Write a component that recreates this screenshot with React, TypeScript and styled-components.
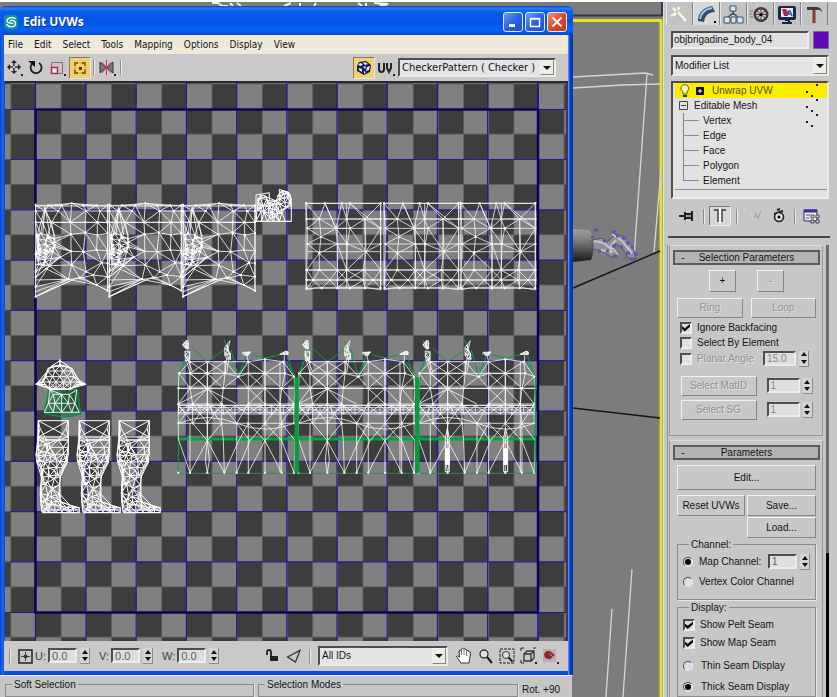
import React, { useState } from "react";
import styled, { createGlobalStyle, css } from "styled-components";

const GlobalStyle = createGlobalStyle`
  *, *::before, *::after { box-sizing: border-box; }
  html, body, #root { height: 100%; }
  body { margin: 0; overflow: hidden; background: #fff; color: #141414; font: 10px/12px "Liberation Sans", Arial, sans-serif; }
  button, input, select { font: inherit; color: inherit; margin: 0; }
  fieldset { min-width: 0; margin: 0; }
`;

/* ---------- geometry ---------- */

type Pt = [number, number];
type Line = [number, number, number, number];

const triangulate = (pts: Pt[], maxEdge: number): Line[] => {
  const seen = new Set<string>();
  const out: Line[] = [];
  const add = (a: number, b: number) => {
    const key = a < b ? `${a}-${b}` : `${b}-${a}`;
    const [p, q] = [pts[a], pts[b]];
    if (seen.has(key) || Math.hypot(p[0] - q[0], p[1] - q[1]) > maxEdge) return;
    seen.add(key);
    out.push([p[0], p[1], q[0], q[1]]);
  };
  for (let i = 0; i < pts.length; i++)
    for (let j = i + 1; j < pts.length; j++)
      for (let k = j + 1; k < pts.length; k++) {
        const [ax, ay] = pts[i];
        const [bx, by] = pts[j];
        const [cx, cy] = pts[k];
        const d = 2 * (ax * (by - cy) + bx * (cy - ay) + cx * (ay - by));
        if (Math.abs(d) < 1) continue;
        const a2 = ax * ax + ay * ay;
        const b2 = bx * bx + by * by;
        const c2 = cx * cx + cy * cy;
        const ux = (a2 * (by - cy) + b2 * (cy - ay) + c2 * (ay - by)) / d;
        const uy = (a2 * (cx - bx) + b2 * (ax - cx) + c2 * (bx - ax)) / d;
        const r = Math.hypot(ax - ux, ay - uy);
        if (r > maxEdge * 3) continue;
        if (pts.some((p) => Math.hypot(p[0] - ux, p[1] - uy) < r - 0.01)) continue;
        add(i, j);
        add(j, k);
        add(i, k);
      }
  return out;
};

const scatter = (x: number, y: number, w: number, h: number, n: number, seed: number): Pt[] => {
  let s = seed * 7919;
  const next = () => {
    s = (s * 16807) % 2147483647;
    return s / 2147483647;
  };
  return Array.from({ length: n }, () => [Math.round(x + next() * w), Math.round(y + next() * h)] as Pt);
};

const row = (y: number, xs: number[]): Pt[] => xs.map((x) => [x, y]);
const toPath = (lines: Line[]) => lines.map((l) => `M${l[0]} ${l[1]}L${l[2]} ${l[3]}`).join("");
const toDots = (pts: Pt[]) => pts.map((p) => `M${p[0] - 3} ${p[1]}h6`).join("");

const fan = (hub: Pt, pts: Pt[]): Line[] => pts.map((p) => [hub[0], hub[1], p[0], p[1]]);

const tunicPts: Pt[] = [
  ...row(76, [107, 145, 185, 250, 290, 323]), [215, 70],
  ...row(93, [107, 135, 175, 258, 300, 323]),
  ...row(127, [107, 128, 155, 211, 256, 292, 323]),
  [213, 163], [256, 158], [292, 165], [323, 160],
  [180, 232], [213, 214], [250, 215], [290, 210], [323, 212],
  [215, 255], [258, 275], [280, 285], [305, 248], [323, 250],
  [205, 298], [240, 295], [290, 315], [323, 290], [323, 332],
  ...scatter(107, 160, 64, 60, 34, 7),
  ...scatter(107, 215, 45, 45, 14, 23),
  [107, 275], [107, 292], [107, 320], [107, 350],
];
const tunic =
  toPath(triangulate(tunicPts, 95)) +
  toPath(fan([180, 232], [[107, 275], [107, 292], [107, 255], [120, 240]])) +
  toPath(fan([205, 298], [[107, 350], [107, 335], [107, 320], [107, 300], [135, 265]])) +
  toPath(fan([135, 82], [[112, 165], [128, 165], [150, 165], [165, 170]])) +
  "M107 70V350L240 290L323 332V76M107 78H323M107 127H323M107 350L215 300";

const clothPts: Pt[] = [
  ...row(70, [168, 225, 275, 300, 392]),
  ...row(117, [170, 208, 290, 345, 392]),
  ...row(145, [172, 258, 300, 392]), [213, 170],
  ...row(192, [172, 262, 292, 392]), [208, 220], [348, 215],
  ...row(270, [170, 208, 262, 290, 340, 392]),
  ...row(300, [170, 190, 240, 262, 290, 340, 370, 392]),
  ...row(325, [170, 215, 262, 300, 345, 392]),
];
const cloth =
  toPath(triangulate(clothPts, 105)) +
  "M168 66V330M392 66V330M168 70H392M170 117H392M170 145H392M172 192H392M172 215H392M170 270H392M170 300H392M262 130V325M290 70V325M345 117V325M225 70L258 145M300 70L392 145M170 330L200 322H350L392 330";

const torsoPts: Pt[] = [
  ...row(95, [60, 112, 165, 235, 340]), [285, 88],
  ...row(130, [27, 60, 112, 165, 235, 285, 345]), [205, 140], [372, 140],
  ...row(175, [25, 60, 112, 160, 235, 285, 335, 375]),
  ...row(222, [25, 68, 112, 155, 235, 285, 330, 372]),
  ...row(280, [25, 68, 112, 155, 200, 235, 285, 335, 372]),
];
const torsoBand: Pt[] = [
  ...row(226, [25, 55, 90, 125, 160, 195, 235, 270, 305, 340, 372]),
  ...row(240, [35, 75, 112, 145, 180, 215, 250, 285, 322, 358]),
  ...row(252, [25, 55, 90, 125, 160, 195, 235, 270, 305, 340, 372]),
];
const torso =
  toPath(triangulate(torsoPts, 75)) +
  toPath(triangulate(torsoBand, 60)) +
  "M25 226H372M25 233H372M25 240H372M25 247H372M27 130H345M25 175H375M25 280Q112 245 200 280T372 280" +
  toPath(fan([112, 332], [[60, 428], [163, 428], [68, 280], [155, 280], [112, 97]])) +
  toPath(fan([285, 332], [[235, 428], [335, 428], [235, 280], [335, 280], [285, 88]])) +
  toPath(fan([112, 177], [[25, 222], [200, 222], [60, 130], [165, 130]])) +
  "M25 280V327L60 428V280M163 428L205 335L235 280V428M200 428L240 332L200 280V428M335 428V280L375 332L372 428L335 332M112 280V332L106 390L112 428L118 390L112 332M285 332V428M155 280L160 332L163 428M240 332L285 280L335 332M330 95V428";
const straps = toPath([
  ...triangulate(scatter(38, 30, 24, 34, 16, 21), 30),
  ...triangulate(scatter(44, 60, 16, 34, 10, 3), 30),
  ...triangulate(scatter(163, 30, 20, 60, 20, 33), 32),
  ...triangulate(scatter(212, 64, 30, 12, 12, 9), 30),
  ...triangulate(scatter(329, 64, 28, 12, 12, 14), 30),
]) + "M48 90L60 127M54 90L68 127M170 85L165 128M177 85L170 128M230 76L235 95M343 76L343 95";

const legPts: Pt[] = [
  ...row(242, [115, 205]), ...row(291, [115, 205]), [120, 265], [198, 265],
  ...row(300, [113, 140, 175, 205]), ...row(322, [112, 150, 190, 205]),
  ...row(345, [108, 135, 165, 200]), ...row(365, [110, 130, 150, 180, 200]),
  ...row(383, [122, 145, 170, 190]), ...row(410, [124, 181]),
  ...row(435, [122, 178]), ...row(460, [121, 177]),
  ...row(485, [122, 182]), ...row(503, [124, 200, 222, 238]),
  ...scatter(112, 300, 90, 80, 22, 41),
  ...scatter(126, 388, 52, 112, 30, 17),
  ...scatter(135, 492, 90, 26, 14, 29),
  ...row(518, [128, 145, 165, 185, 205, 220, 238]),
];
const leg = toPath(triangulate(legPts, 62)) + "M115 242H205M115 291H205M113 300H205M115 242L205 291M205 242L115 291M115 242V350L125 383M205 242V345L185 385M128 510H238M128 518H238M125 385V515M180 385V485L238 505";

const dome: Pt[] = [
  [180, 62], ...row(78, [155, 180, 205]), ...row(93, [143, 165, 190, 215]), ...row(110, [138, 158, 180, 202, 222]),
  ...row(126, [130, 148, 168, 190, 212, 232]), ...row(133, [108, 120, 243, 257]), ...row(146, [148, 168, 190, 212]),
];
const skirt: Pt[] = [
  [150, 150], [230, 150], ...row(163, [160, 185, 208]), ...row(190, [145, 165, 185, 205, 225]), ...row(217, [133, 160, 185, 215, 238]),
];
const head: Pt[] = [...scatter(18, 42, 42, 56, 26, 5), ...scatter(56, 58, 30, 60, 24, 19), ...scatter(84, 30, 38, 70, 28, 11), ...row(124, [18, 35, 52, 70, 88, 106, 124])];

const MESH = {
  tunic, tunicDots: toDots(tunicPts), cloth, clothDots: toDots(clothPts),
  torso, torsoDots: toDots([...torsoPts, ...row(428, [25, 60, 112, 163, 200, 235, 285, 335, 372])]), straps,
  leg, dome: toPath(triangulate(dome, 55)), skirt: toPath(triangulate(skirt, 45)), head: toPath(triangulate(head, 34)),
};

const range = (n: number) => Array.from({ length: n }, (_, i) => i);

const UvCanvas = () => (
  <Canvas viewBox="5 81 563 560" preserveAspectRatio="xMinYMin slice" role="img" aria-label="UV layout">
    <defs>
      <pattern id="checker" x="36" y="109" width="50.3" height="50.3" patternUnits="userSpaceOnUse">
        <rect width="51" height="51" fill="#808080" />
        <rect width="25.15" height="25.15" fill="#3d3d3d" />
        <rect x="25.15" y="25.15" width="25.15" height="25.15" fill="#3d3d3d" />
      </pattern>
    </defs>
    <rect x="5" y="81" width="800" height="800" fill="url(#checker)" />
    <g stroke="#2a1c98" strokeWidth="1.2">
      {range(10).map((i) => <line key={i} x1={86 + i * 50.2} x2={86 + i * 50.2} y1="81" y2="641" />)}
      {range(9).map((i) => <line key={i} x1="10" x2="568" y1={159.5 + i * 50.3} y2={159.5 + i * 50.3} />)}
    </g>
    <path d="M35.5 81V641M538 81V641M10 109.5H568M10 612.5H568" stroke="#1c1796" strokeWidth="1.2" />
    <rect x="35.5" y="109.5" width="502.5" height="503" fill="none" stroke="#050059" strokeWidth="2.4" />
    <path d="M5 82H568" stroke="#2c2c30" strokeWidth="2" />
    <path d="M567 83V641" stroke="#40365c" strokeWidth="2" />
    <g fill="none" stroke="#fff" strokeWidth="2.7">
      <g transform="translate(0 180) scale(.3333)">
        {[0, 221, 442].map((x) => (
          <g key={x} transform={`translate(${x} 0)`}>
            <path d={MESH.tunic} opacity=".9" />
            <path d={MESH.tunicDots} strokeWidth="6" />
          </g>
        ))}
      </g>
      <g transform="translate(250 180) scale(.3333)">
        {[0, 234, 464].map((x) => (
          <g key={x} transform={`translate(${x} 0)`}>
            <path d={MESH.cloth} opacity=".82" />
            <path d={MESH.clothDots} strokeWidth="6" />
          </g>
        ))}
        <path d={MESH.head} strokeWidth="3" />
        <path d="M18 124V45L58 38V60M18 124H124V55L108 35L88 28V60" strokeWidth="3" />
      </g>
      <g transform="translate(170 330) scale(.3333)">
        {[0, 360, 721].map((x) => (
          <g key={x} transform={`translate(${x} 0)`}>
            <path
              d="M25 175L40 92M68 55L112 95L165 58M183 60L205 140L228 78M245 74L285 84L330 74M352 78L372 140M25 175V430H375M27 130L45 90M350 95L375 140M38 30L62 90M163 30L183 90M205 140L235 90"
              stroke="#149c46"
              strokeWidth="3"
            />
            <path d="M25 327H375" stroke="#00a83c" strokeWidth="9" />
            <path d={MESH.torso} opacity=".86" />
            <path d={MESH.straps} strokeWidth="2.4" opacity=".95" />
            <path d={MESH.torsoDots} strokeWidth="6" />
          </g>
        ))}
        <path d="M380 142V430M742 142V430" stroke="#0a9a3c" strokeWidth="13" />
        <path d="M1096 142V430" stroke="#0da040" strokeWidth="4" />
        <path d="M832 355V405M1007 355V405" strokeWidth="13" />
        <path d="M826 325L832 295L838 325V425H826ZM1001 325L1007 295L1013 325V425H1001Z" />
      </g>
      <g transform="translate(0 340) scale(.3333)">
        <path d="M147 148H232L242 222Q185 240 132 218Z" fill="#16713a" fillOpacity=".6" stroke="#0f8e41" strokeWidth="4" />
        <path d={MESH.skirt} />
        <path d={MESH.dome} strokeWidth="3" />
        <path d="M107 133H135L148 148H212L232 133H258L240 128L215 85L180 75L145 85L128 125ZM180 58V80" strokeWidth="4" />
        {[0, 123, 243].map((x) => <path key={x} transform={`translate(${x} 0)`} d={MESH.leg} strokeWidth="3" />)}
      </g>
    </g>
  </Canvas>
);

const Scene = () => (
  <Backdrop viewBox="0 0 664 697" preserveAspectRatio="xMaxYMin slice" aria-hidden="true">
    <defs>
      <linearGradient id="arm" x1="0" y1="0" x2="0" y2="1">
        <stop offset="0" stopColor="#a29e9e" /><stop offset=".4" stopColor="#787474" /><stop offset="1" stopColor="#181818" />
      </linearGradient>
    </defs>
    <rect width="664" height="697" fill="#7c7c7c" />
    <path d="M212 3h6l4 3h6M230 3l3 3M237 3l4 3M284 6l7-3M300 6v-3M316 3l-2 3M358 3l4 3M366 3v3M374 3l14 1-6 2M378 3l4 3" stroke="#eee" strokeWidth="2" fill="none" />
    <path d="M0 15.5H662V2" stroke="#35354c" strokeWidth="2" fill="none" />
    <path d="M573 20.5H661V697" stroke="#e8e128" strokeWidth="3" fill="none" />
    <rect x="663" width="2" height="697" fill="#dfe2e5" />
    <g stroke="#d5d5d5" strokeWidth="1.3" fill="none">
      <path d="M573 77L645 73L653 75M573 88L622 85L660 84M647 74L634 258M661 170L654 252M612 609L606 697M632 569L623 697" />
    </g>
    <path d="M573 288L660 251M573 408L660 418" stroke="#151515" strokeWidth="1.4" />
    <path d="M572 229L590 230Q597 244 591 260L572 262Z" fill="url(#arm)" />
    <path d="M592 240l10-2 5 4 9-8 8 3 7 8 4 8 1 6-8-1-5-9-8-6-2 7 5 6-7 1-8-5-10-3Z" fill="#918e96" stroke="#55555e" />
    <path d="M594 241l10 2 8 7M612 234l10 7 10 12M600 250l13 2M616 240l-5 6 7 9" stroke="#c8c4cc" strokeWidth="2" fill="none" />
    <path d="M594 230h4M591 237h3M591 246h3M598 251h3M603 241h3M606 251h3M612 232h4M616 236h3M612 246h4M622 238h4M626 243h3M613 256h4M626 253h4M631 247h3M634 254h4M630 259h5M620 247h3" stroke="#5d54c0" strokeWidth="3" />
  </Backdrop>
);

/* ---------- shared widgets ---------- */

const raised = css`border: 1px solid; border-color: #f2f2f2 #858585 #858585 #f2f2f2;`;
const sunken = css`border: 2px solid; border-color: #4e4e50 #ececec #ececec #4e4e50;`;

const PushButton = styled.button<{ $h?: number }>`
  ${raised}
  height: ${(p) => p.$h ?? 20}px;
  padding: 0;
  background: #c9c8c9;
  white-space: nowrap;
  &:disabled { color: #909090; text-shadow: 1px 1px #e4e4e4; }
`;

const SpinWrap = styled.span<{ $w: number }>`
  display: inline-grid;
  grid-template-columns: 1fr 10px;
  column-gap: 3px;
  width: ${(p) => p.$w}px;
  height: 16px;
`;
const SpinInput = styled.input`
  ${sunken}
  min-width: 0;
  width: 100%;
  height: 15px;
  padding: 0 2px;
  background: #dedddf;
  color: #5d5d5d;
  &:disabled { color: #8b8b8b; }
`;
const SpinButtons = styled.span`
  display: grid;
  grid-template-rows: 1fr 1fr;
  border-right: 1px solid #8b8b8b;
  border-bottom: 1px solid #8b8b8b;
`;
const SpinButton = styled.button`
  display: grid;
  place-items: center;
  padding: 0;
  border: 0;
  background: #d6d5d5;
`;
const Spinner = ({ label, value, width, disabled }: { label: string; value: string; width: number; disabled?: boolean }) => (
  <SpinWrap $w={width}>
    <SpinInput aria-label={label} defaultValue={value} disabled={disabled} />
    <SpinButtons>
      <SpinButton aria-label={`${label} up`}><svg width="6" height="4"><path d="M3 0L6 4H0Z" fill="#111" /></svg></SpinButton>
      <SpinButton aria-label={`${label} down`}><svg width="6" height="4"><path d="M3 4L6 0H0Z" fill="#111" /></svg></SpinButton>
    </SpinButtons>
  </SpinWrap>
);

const SelectWrap = styled.span<{ $h: number; $big?: boolean }>`
  ${sunken}
  display: grid;
  grid-template-columns: 1fr 14px;
  height: ${(p) => p.$h}px;
  background: #e4e3e5;
  font-size: ${(p) => (p.$big ? 11 : 10)}px;
  min-width: 0;
`;
const NativeSelect = styled.select`
  grid-area: 1 / 1 / 2 / 3;
  appearance: none;
  min-width: 0;
  width: 100%;
  border: 0;
  padding: 0 16px 0 2px;
  background: transparent;
`;
const DropArrow = styled.span`
  grid-area: 1 / 2;
  ${raised}
  display: grid;
  place-items: center;
  background: #efeee4;
  pointer-events: none;
`;
const DropDown = ({ label, value, height, big }: { label: string; value: string; height: number; big?: boolean }) => (
  <SelectWrap $h={height} $big={big}>
    <NativeSelect aria-label={label}><option>{value}</option></NativeSelect>
    <DropArrow><svg width="8" height="4"><path d="M0 0H8L4 4Z" fill="#111" /></svg></DropArrow>
  </SelectWrap>
);

const Tick = styled.input`
  appearance: none;
  ${sunken}
  display: grid;
  width: 12px;
  height: 12px;
  flex: none;
  background: #dededf;
  &:checked::before {
    content: "";
    width: 8px;
    height: 8px;
    background: #000;
    clip-path: polygon(0 35%, 35% 60%, 100% 5%, 100% 40%, 35% 100%, 0 70%);
  }
`;
const Dot = styled(Tick)`
  width: 10px;
  height: 10px;
  border-width: 1px;
  border-radius: 50%;
  place-items: center;
  &:checked::before { width: 6px; height: 6px; border-radius: 50%; clip-path: none; }
`;
const Option = styled.label<{ $h?: number; $gap?: number; $off?: boolean }>`
  display: flex;
  align-items: center;
  gap: ${(p) => p.$gap ?? 5}px;
  height: ${(p) => p.$h ?? 15}px;
  white-space: nowrap;
  ${(p) => p.$off && css`color: #909090; text-shadow: 1px 1px #e4e4e4;`}
`;

/* ---------- editor window ---------- */

const Shell = styled.div`display: flex; height: 100vh; padding-top: 2px; background: #fff;`;
const Workspace = styled.main`
  position: relative;
  flex: 1;
  min-width: 0;
  display: flex;
  flex-direction: column;
  padding: 4px 91px 0 0;
  overflow: hidden;
`;
const Backdrop = styled.svg`position: absolute; inset: -2px 0 0; width: 100%; height: calc(100% + 2px);`;
const Window = styled.section`
  position: relative;
  flex: 1;
  min-height: 0;
  display: flex;
  flex-direction: column;
  padding: 0 5px 4px 4px;
  border-radius: 6px 6px 0 0;
  background: linear-gradient(90deg, #0a43cf, #1b6cee 3px, #0a4bd8 4px, #0a4bd8 calc(100% - 5px), #6aa9f0 calc(100% - 5px), #0842cf calc(100% - 3px), #0634a8);
`;
const TitleBar = styled.header`
  display: flex;
  align-items: center;
  gap: 5px;
  height: 29px;
  flex: none;
  margin: 0 -5px 0 -4px;
  padding: 3px 6px 0 4px;
  border-radius: 6px 6px 0 0;
  background: linear-gradient(#0a3fb4, #2a7cf6 2px, #0b5cea 6px, #0055e6 16px, #0563f8 24px, #0646c8);
  color: #fff;
`;
const Title = styled.h1`
  flex: 1;
  margin: 0;
  font: bold 12px/16px "Open Sans", "Noto Sans", sans-serif;
  text-shadow: 1px 1px #12308a;
`;
const Caption = styled.button<{ $close?: boolean }>`
  display: grid;
  place-items: center;
  width: 20px;
  height: 20px;
  margin-right: -3px;
  padding: 0;
  border: 1px solid #e0e8fb;
  border-radius: 3px;
  background: ${(p) => (p.$close ? "linear-gradient(135deg, #f0947a, #e04a22 50%, #c83a14)" : "linear-gradient(135deg, #6b9df5, #2a63e4 50%, #1a4ed0)")};
  &:last-child { margin-right: 0; }
`;
const MenuBar = styled.nav`
  display: flex;
  align-items: center;
  gap: 11px;
  height: 19px;
  flex: none;
  padding-left: 4px;
  background: #efe9da;
  font-family: "DejaVu Sans Condensed", "DejaVu Sans", sans-serif;
`;
const MenuItem = styled.button`padding: 0; border: 0; background: none; line-height: 14px;`;
const ToolBar = styled.div<{ $h: number; $end: number }>`
  display: flex;
  align-items: center;
  height: ${(p) => p.$h}px;
  flex: none;
  padding: 0 ${(p) => p.$end}px 0 1px;
  background: #cac8c9;
`;
const Tool = styled.button<{ $on?: boolean; $w?: number }>`
  display: grid;
  place-items: center;
  width: ${(p) => p.$w ?? 22}px;
  height: 22px;
  flex: none;
  padding: 0;
  border: 1px solid transparent;
  background: none;
  ${(p) => p.$on && css`background: #f2cf72; border-color: #8d7c50 #f0e6c8 #f0e6c8 #8d7c50;`}
`;
const Sep = styled.span<{ $m?: number }>`
  width: 2px;
  height: 15px;
  flex: none;
  margin: 0 ${(p) => p.$m ?? 2}px;
  border-left: 1px solid #8d8d8d;
  border-right: 1px solid #ececec;
`;
const Spacer = styled.span`flex: 1;`;
const UvSelect = styled.span`display: grid; width: 158px; margin-left: 2px; font-family: "DejaVu Sans Condensed", "DejaVu Sans", sans-serif;`;
const CanvasArea = styled.div`flex: 1; min-height: 0; background: #3d3d3d; margin-left: 1px;`;
const Canvas = styled.svg`display: block; width: 100%; height: 100%;`;
const AxisField = styled.div`display: flex; align-items: center; gap: 2px; margin-right: 9px; font-size: 11px; color: #444;`;
const IdSelect = styled.span`display: grid; width: 130px; margin: 0 5px 0 3px;`;

const UvWindow = () => (
  <Window aria-label="Edit UVWs">
    <TitleBar>
      <svg width="14" height="14" viewBox="0 0 14 14">
        <rect width="14" height="14" rx="3" fill="#138f9e" />
        <path d="M11.5 4C9 1.5 3 2.5 3 6c0 3 5.5 1 6 3M2.5 9c2 4 9 3.500 9-.5C11.500 5 6.500 4.500 6 6.500" fill="none" stroke="#e4fff4" strokeWidth="1.500" />
      </svg>
      <Title>Edit UVWs</Title>
      <Caption aria-label="Minimize"><svg width="12" height="12"><path d="M2 9.500h6" stroke="#fff" strokeWidth="3" /></svg></Caption>
      <Caption aria-label="Maximize"><svg width="12" height="12"><path d="M1.500 2.500h9v8h-9ZM1 3h10" fill="none" stroke="#fff" strokeWidth="1.500" /></svg></Caption>
      <Caption $close aria-label="Close"><svg width="12" height="12"><path d="M1.500 1.500l9 9M10.500 1.500l-9 9" stroke="#fff" strokeWidth="2" /></svg></Caption>
    </TitleBar>
    <MenuBar>
      {["File", "Edit", "Select", "Tools", "Mapping", "Options", "Display", "View"].map((m) => <MenuItem key={m}>{m}</MenuItem>)}
    </MenuBar>
    <ToolBar $h={27} $end={12}>
      <Tool aria-label="Move" $w={20}>
        <svg width="18" height="18" viewBox="0 0 18 18"><path d="M8 1l3 3H5ZM8 15l3-3H5ZM1 8l3-3v6ZM15 8l-3-3v6Z" fill="#222" /><path d="M8 4v3M8 9v3M4 8h3M9 8h3" stroke="#333" strokeWidth="1.500" /><path d="M15 15h2v2h-2Z" fill="#222" /></svg>
      </Tool>
      <Tool aria-label="Rotate"><svg width="18" height="18" viewBox="0 0 18 18"><path d="M12 4a5.500 5.500 0 1 1-7 1" fill="none" stroke="#1b1b1b" strokeWidth="1.800" /><path d="M1 2h7v6Z" fill="#111" /></svg></Tool>
      <Tool aria-label="Scale"><svg width="18" height="18" viewBox="0 0 18 18"><path d="M2.500 3.500h11v11h-11Z" fill="#d0c4c7" stroke="#8b6b72" /><path d="M2.500 8.500h6v6h-6Z" fill="#eee" stroke="#a4304a" strokeWidth="1.500" /><path d="M15 15h2v2h-2Z" fill="#222" /></svg></Tool>
      <Tool aria-label="Freeform mode" $on><svg width="16" height="16" viewBox="0 0 16 16"><path d="M6 3H3v3M10 3h3v3M6 13H3v-3M10 13h3v-3" fill="none" stroke="#93650a" strokeWidth="1.800" /><path d="M7 7h3v3H7Z" fill="#5c3308" /><path d="M7 3h3M7 13h3M3 7v3M13 7v3" stroke="#b98a22" /></svg></Tool>
      <Sep $m={2} />
      <Tool aria-label="Mirror" $w={20}><svg width="18" height="18" viewBox="0 0 18 18"><path d="M2 3v11l6-5.500ZM15 3v11L9 8.500Z" fill="#777" stroke="#333" /><path d="M8.500 1v15M4 3l9 11M13 3L4 14" stroke="#bb405c" /><path d="M16 15h2v2h-2Z" fill="#222" /></svg></Tool>
      <Sep $m={3} />
      <Spacer />
      <Tool aria-label="Show map" $on>
        <svg width="18" height="18" viewBox="0 0 18 18"><path d="M4 3l7-1 5 4-1 7-6 3-7-4V7Z" fill="#16184e" /><path d="M5 4l3 1-2 2-3-1ZM10 3l3 2-3 1-2-2ZM4 9l3 1v3l-3-2ZM8 8l3-1-1 3ZM12 8l3-1-1 4-3 1ZM9 12l2 1-2 2Z" fill="#e5e7ff" /></svg>
      </Tool>
      <Tool aria-label="UV coordinates" $w={21}>
        <svg width="19" height="18" viewBox="0 0 19 18"><path d="M3 4v6q0 3 2.500 3T8 10V4M11 4v5l2 4 2-4V4" fill="none" stroke="#222" strokeWidth="2" /><path d="M17 15h2v2h-2Z" fill="#222" /></svg>
      </Tool>
      <UvSelect><DropDown label="Texture" value="CheckerPattern  ( Checker )" height={19} big /></UvSelect>
    </ToolBar>
    <CanvasArea><UvCanvas /></CanvasArea>
    <ToolBar $h={30} $end={6}>
      <Sep $m={4} />
      <Tool aria-label="Absolute mode" $w={20}><svg width="15" height="15" viewBox="0 0 15 15"><path d="M1 1h13v13H1Z" fill="none" stroke="#222" strokeWidth="1.500" /><path d="M7.500 3v9M3 7.500h9" stroke="#444" /><circle cx="7.500" cy="7.500" r="2" fill="#333" /></svg></Tool>
      {["U", "V", "W"].map((a) => (
        <AxisField key={a}><span>{a}:</span><Spinner label={a} value="0.0" width={42} /></AxisField>
      ))}
      <Spacer />
      <Tool aria-label="Lock selection"><svg width="16" height="16" viewBox="0 0 16 16"><path d="M3 7V4q0-2 2-2t2 2v5" fill="none" stroke="#222" strokeWidth="1.800" /><path d="M6 8h8v5H6Z" fill="#222" /></svg></Tool>
      <Tool aria-label="Filter faces"><svg width="16" height="16" viewBox="0 0 16 16"><path d="M1.500 9L14 2.500 9.500 14Z" fill="none" stroke="#333" strokeWidth="1.300" /></svg></Tool>
      <Sep $m={4} />
      <IdSelect><DropDown label="Material IDs" value="All IDs" height={20} /></IdSelect>
      <Tool aria-label="Pan">
        <svg width="18" height="18" viewBox="0 0 18 18"><path d="M6 16L1.500 9.500q1-1.500 3 .5L4 4q1-1.500 2 0l.5-2q1.500-1 2 0l.5 0q1.500-1 2 1l1 .5q2-.5 2 1.500 2-.5 1.500 1.500L14 16Z" fill="#fff" stroke="#333" /><path d="M6.500 4v4M9 3v5M11.500 4v5" stroke="#777" /></svg>
      </Tool>
      <Tool aria-label="Zoom" $w={21}><svg width="16" height="16" viewBox="0 0 16 16"><circle cx="6" cy="6" r="4" fill="#e4e4e4" stroke="#333" strokeWidth="1.400" /><path d="M9 9l5 6" stroke="#222" strokeWidth="2.200" /></svg></Tool>
      <Tool aria-label="Zoom region"><svg width="18" height="18" viewBox="0 0 18 18"><path d="M2 2h14v14H2Z" fill="none" stroke="#222" strokeDasharray="3 1" /><circle cx="8" cy="8" r="3.500" fill="#e4e4e4" stroke="#333" /><path d="M10.500 10.500l4 4" stroke="#222" strokeWidth="2" /></svg></Tool>
      <Tool aria-label="Zoom extents"><svg width="18" height="18" viewBox="0 0 18 18"><path d="M4 7h7v7H4ZM4 7l3-3h7v7l-3 3M11 7l3-3" fill="none" stroke="#333" strokeWidth="1.300" /><path d="M1 4V1h3M13 1h3M1 13v3h3" fill="none" stroke="#222" /><path d="M15 15h2v2h-2Z" fill="#222" /></svg></Tool>
      <Tool aria-label="Pixel snap"><svg width="18" height="18" viewBox="0 0 18 18"><rect x="1" y="2" width="13" height="13" fill="#b5b0b0" /><path d="M5 11Q2 8 4 6t5 0l3 3M5 11l2-2M8 12L5 9q-1-2 1-2l4 4" fill="none" stroke="#981e2c" strokeWidth="2" /><path d="M15 15h2v2h-2Z" fill="#222" /></svg></Tool>
    </ToolBar>
  </Window>
);

const OptionsStrip = styled.section`
  position: relative;
  display: grid;
  grid-template-columns: 250fr 261fr 48px;
  column-gap: 4px;
  height: 22px;
  flex: none;
  margin-right: 1px;
  padding: 3px 2px 0 5px;
  overflow: hidden;
  border-top: 1px solid #efefef;
  background: #c8c6c5;
`;
const Group = styled.fieldset`
  padding: 0;
  border: 1px solid #8b8b8b;
  box-shadow: 1px 1px #e6e6e6;
`;
const GroupLegend = styled.legend`margin-left: 6px; padding: 0 2px; line-height: 11px;`;
const RotateButton = styled.button`align-self: start; margin-top: 5px; padding: 0; border: 0; background: none; white-space: nowrap; text-align: left;`;

/* ---------- command panel ---------- */

const Panel = styled.aside`
  display: flex;
  flex-direction: column;
  width: 173px;
  flex: none;
  overflow: hidden;
  background: #c7c7c8;
`;
const Tabs = styled.div`display: grid; grid-template-columns: repeat(6, 1fr); height: 23px; flex: none; padding: 0 9px 0 2px;`;
const Tab = styled.button<{ $on?: boolean }>`
  display: grid;
  place-items: center;
  padding: 0;
  border: 0;
  border-right: 1px solid #858585;
  background: ${(p) => (p.$on ? "#d8d8d8" : "#c3c3c4")};
  box-shadow: inset 1px 0 #e9e9e9;
`;
const PanelTop = styled.div`display: flex; flex-direction: column; padding: 6px 8px 0 7px; flex: none;`;
const NameRow = styled.div`display: grid; grid-template-columns: 1fr 16px; column-gap: 4px; height: 18px; margin-bottom: 6px;`;
const NameInput = styled.input`${sunken} min-width: 0; width: 100%; padding: 0 1px; background: #e0e0e1;`;
const Swatch = styled.button`padding: 0; border: 1px solid #7a6a90; background: #6208b4;`;
const Stack = styled.ul`
  ${sunken}
  height: 118px;
  margin: 5px 0 0;
  padding: 0 0 0 2px;
  list-style: none;
  background: #e2e2e3;
`;
const StackRow = styled.li<{ $on?: boolean }>`
  display: flex;
  align-items: center;
  height: 15px;
  padding: 0 6px 0 4px;
  ${(p) => p.$on && css`background: #fcec00; color: #5d5200;`}
`;
const StackText = styled.span<{ $indent?: number }>`flex: 1; padding-left: ${(p) => p.$indent ?? 3}px;`;
const StackEnd = styled.li`margin-top: 1px; border-top: 1px solid #8f8f8f;`;
const StackTools = styled.div`display: flex; align-items: center; justify-content: space-between; height: 24px; margin-top: 5px; padding: 0 6px 0 5px;`;
const StackTool = styled.button<{ $on?: boolean }>`
  display: grid; place-items: center; width: 22px; height: 20px; padding: 0; border: 1px solid transparent; background: none;
  ${(p) => p.$on && css`border-color: #777 #eee #eee #777; background: #d6d6d6;`}
`;
const Divider = styled.hr`width: 162px; height: 2px; flex: none; margin: 8px 0 7px 4px; border: 0; background: #454545;`;
const Rollouts = styled.div`
  display: grid;
  grid-template-columns: 1fr 3px;
  flex: 1;
  min-height: 0;
  margin: 0 8px 0 3px;
  overflow: hidden;
`;
const Scroll = styled.div`background: linear-gradient(#6b6b6b 308px, #050505 308px);`;
const RolloutList = styled.div`display: flex; flex-direction: column; gap: 4px; min-width: 0; padding: 0 3px 0 1px; border-left: 1px solid #86929a;`;
const Rollout = styled.section<{ $h?: number }>`
  display: flex;
  flex-direction: column;
  flex: none;
  height: ${(p) => (p.$h ? `${p.$h}px` : "auto")};
  padding: 4px 2px 6px 3px;
  border: 1px solid #989898;
  border-top-color: #dedede;
`;
const Header = styled.button`
  display: grid;
  grid-template-columns: 10px 1fr 10px;
  align-items: center;
  height: 15px;
  flex: none;
  padding: 0 3px;
  border: 2px solid #5b5b5b;
  background: #b3b3b4;
`;
const Body = styled.div`display: flex; flex-direction: column; padding: 5px 4px 0 4px;`;
const Pair = styled.div<{ $cols: string; $gap?: number; $top?: number }>`
  display: grid;
  grid-template-columns: ${(p) => p.$cols};
  column-gap: ${(p) => p.$gap ?? 8}px;
  justify-content: center;
  align-items: center;
  margin-top: ${(p) => p.$top ?? 0}px;
`;
const CheckList = styled.div`display: flex; flex-direction: column; margin-top: 2px; padding-left: 3px;`;
const PlanarRow = styled.div`display: flex; align-items: center; justify-content: space-between; height: 17px; padding-right: 7px;`;
const PanelGroup = styled(Group)<{ $top: number }>`
  display: flex;
  flex-direction: column;
  margin-top: ${(p) => p.$top}px;
  padding: 0 4px 5px 5px;
`;

const tabIcons = [
  <path d="M5 4l3 3M10 8l8 9M6 9l2 2M11 3l-1 3M3 12l4-2" stroke="#fafae6" strokeWidth="2.500" fill="none" />,
  <><path d="M3 17Q3 5 17 2l3 6Q10 8 9 18Z" fill="#2e4f78" /><path d="M5 15Q6 6 17 4" stroke="#a8c6df" strokeWidth="2" fill="none" /><path d="M19 17h2v2h-2Z" /></>,
  <><path d="M11 6v5M5 14l6-5 6 5" stroke="#456" fill="none" strokeWidth="1.500" /><path d="M8 2h6v5H8ZM2 13h6v6H2ZM9 13h5v6H9ZM15 13h6v6h-6Z" fill="#dce5ef" stroke="#40506a" /></>,
  <><circle cx="12" cy="10.500" r="7.500" fill="#3c3c40" /><circle cx="12" cy="10.500" r="5" fill="#d2c8ce" /><path d="M12 5v11M6.500 10.500h11M8 7l8 7M16 7l-8 7" stroke="#5a3848" /><circle cx="12" cy="10.500" r="1.500" /><path d="M1 7h3M0 10h3M1 13h3" stroke="#777" /></>,
  <><rect x="2" y="2" width="18" height="14" rx="2" fill="#172747" /><rect x="5" y="4" width="12" height="9" fill="#e9eff5" /><path d="M6 5h4l2 3v4H8Z" fill="#c51f35" /><path d="M11 12l2-5h1l2 5M12 10h3" fill="none" stroke="#2854a8" strokeWidth="1.500" /><path d="M9 16h4v3H6h10" stroke="#172747" fill="none" strokeWidth="2" /></>,
  <><path d="M4 3h10q5 1 5 5-2-3-6-2H4Z" fill="#403a3a" /><path d="M11 6v13" stroke="#883a34" strokeWidth="3" /></>,
];
const tabNames = ["Create", "Modify", "Hierarchy", "Motion", "Display", "Utilities"];

const PointsIcon = () => <svg width="18" height="15" viewBox="0 0 18 15"><path d="M3 8h2v2H3ZM8 12h2v2H8ZM13 1h2v2h-2Z" fill="#222" /></svg>;

const CommandPanel = () => {
  const [channel, setChannel] = useState("map");
  const [seam, setSeam] = useState("thick");
  return (
    <Panel>
      <Tabs>
        {tabIcons.map((icon, i) => <Tab key={tabNames[i]} aria-label={tabNames[i]} $on={i === 1}><svg width="22" height="20" viewBox="0 0 22 20">{icon}</svg></Tab>)}
      </Tabs>
      <PanelTop>
        <NameRow>
          <NameInput aria-label="Object name" defaultValue="objbrigadine_body_04" />
          <Swatch aria-label="Object color" />
        </NameRow>
        <DropDown label="Modifier" value="Modifier List" height={21} />
        <Stack>
          <StackRow $on>
            <svg width="26" height="14" viewBox="0 0 26 14"><path d="M4 8Q1 6 2 3q3-4 7-1 2 3-1 6v2H4Z" fill="#fff8b5" stroke="#665f20" /><path d="M4 12h4" stroke="#333" strokeWidth="2" /><path d="M17 3h8v8h-8Z" fill="#111" /><path d="M19 7h4M21 5v4" stroke="#fff" /></svg>
            <StackText $indent={7}>Unwrap UVW</StackText>
            <PointsIcon />
          </StackRow>
          <StackRow>
            <svg width="9" height="9"><path d="M.5.5h8v8h-8ZM2 4.500h5" fill="none" stroke="#444" /></svg>
            <StackText $indent={6}>Editable Mesh</StackText>
            <PointsIcon />
          </StackRow>
          {["Vertex", "Edge", "Face", "Polygon", "Element"].map((t, i) => (
            <StackRow key={t}>
              <svg width="22" height="15"><path d={i === 4 ? "M4.500 0V7.500H20" : "M4.500 0V15M4.500 7.500H20"} fill="none" stroke="#888" /></svg>
              <StackText $indent={2}>{t}</StackText>
              {i === 0 && <PointsIcon />}
            </StackRow>
          ))}
          <StackEnd />
        </Stack>
        <StackTools>
          <StackTool aria-label="Pin stack"><svg width="18" height="14" viewBox="0 0 18 14"><path d="M1 7h7" stroke="#222" strokeWidth="2" /><path d="M7 3v8M8 5h6M8 9h6M14 2v10" stroke="#222" strokeWidth="2" /><path d="M9 6h4v2H9Z" fill="#999" /></svg></StackTool>
          <Sep />
          <StackTool $on aria-label="Show end result"><svg width="14" height="16" viewBox="0 0 14 16"><path d="M1 2h4v12M13 2H9v12" stroke="#333" fill="none" strokeWidth="1.300" /><path d="M7 1v14" stroke="#fff" strokeWidth="2" /></svg></StackTool>
          <Sep />
          <StackTool aria-label="Make unique"><svg width="16" height="14" viewBox="0 0 16 14"><path d="M2 2l5 8 3-4M9 3l3 6 3-7" stroke="#aaa" fill="none" strokeWidth="1.500" /><path d="M3 3l5 8" stroke="#eee" /></svg></StackTool>
          <StackTool aria-label="Remove modifier"><svg width="14" height="16" viewBox="0 0 14 16"><path d="M2 6l9-3" stroke="#222" strokeWidth="2" /><circle cx="7" cy="9" r="4.500" fill="#ddd" stroke="#222" strokeWidth="1.600" /><circle cx="7" cy="9" r="1.500" /><path d="M5 2l3-1" stroke="#222" strokeWidth="2" /></svg></StackTool>
          <Sep />
          <StackTool aria-label="Configure modifier sets"><svg width="18" height="16" viewBox="0 0 18 16"><path d="M1 2h13v11H1Z" fill="#e5e5f4" stroke="#292970" /><path d="M1 3h13" stroke="#30309a" strokeWidth="3" /><path d="M3 7h4M3 10h3" stroke="#555" /><path d="M8 7h3v3H8ZM13 7h3v3h-3ZM8 12h3v3H8ZM13 12h3v3h-3Z" fill="#ddd" stroke="#444" /></svg></StackTool>
        </StackTools>
      </PanelTop>
      <Divider />
      <Rollouts>
        <RolloutList>
          <Rollout $h={191}>
            <Header><span>-</span><span>Selection Parameters</span></Header>
            <Body>
              <Pair $cols="27px 27px" $gap={21}>
                <PushButton $h={22}>+</PushButton>
                <PushButton $h={22} disabled>-</PushButton>
              </Pair>
              <Pair $cols="1fr 1fr" $top={6}>
                <PushButton disabled>Ring</PushButton>
                <PushButton disabled>Loop</PushButton>
              </Pair>
              <CheckList>
                <Option><Tick type="checkbox" defaultChecked />Ignore Backfacing</Option>
                <Option><Tick type="checkbox" />Select By Element</Option>
                <PlanarRow>
                  <Option $off><Tick type="checkbox" disabled />Planar Angle</Option>
                  <Spinner label="Planar angle" value="15.0" width={46} disabled />
                </PlanarRow>
              </CheckList>
              <Pair $cols="76px 46px" $gap={10} $top={9}>
                <PushButton disabled>Select MatID</PushButton>
                <Spinner label="Material ID" value="1" width={46} disabled />
              </Pair>
              <Pair $cols="76px 46px" $gap={10} $top={4}>
                <PushButton disabled>Select SG</PushButton>
                <Spinner label="Smoothing group" value="1" width={46} disabled />
              </Pair>
            </Body>
          </Rollout>
          <Rollout>
            <Header><span>-</span><span>Parameters</span></Header>
            <Body>
              <PushButton $h={25}>Edit...</PushButton>
              <Pair $cols="69fr 70fr" $gap={2} $top={5}>
                <PushButton $h={21}>Reset UVWs</PushButton>
                <PushButton $h={21}>Save...</PushButton>
              </Pair>
              <Pair $cols="69fr 70fr" $gap={2} $top={1}>
                <span />
                <PushButton $h={21}>Load...</PushButton>
              </Pair>
              <PanelGroup $top={1}>
                <GroupLegend>Channel:</GroupLegend>
                <Pair $cols="1fr 43px" $gap={0} $top={4}>
                  <Option $gap={6}><Dot type="radio" name="channel" checked={channel === "map"} onChange={() => setChannel("map")} />Map Channel:</Option>
                  <Spinner label="Map channel" value="1" width={42} />
                </Pair>
                <Option $h={24} $gap={6}><Dot type="radio" name="channel" checked={channel === "vertex"} onChange={() => setChannel("vertex")} />Vertex Color Channel</Option>
              </PanelGroup>
              <PanelGroup $top={2}>
                <GroupLegend>Display:</GroupLegend>
                <Option $h={24}><Tick type="checkbox" defaultChecked />Show Pelt Seam</Option>
                <Option $h={12}><Tick type="checkbox" defaultChecked />Show Map Seam</Option>
                <Option $h={34} $gap={8}><Dot type="radio" name="seam" checked={seam === "thin"} onChange={() => setSeam("thin")} />Thin Seam Display</Option>
                <Option $h={8} $gap={8}><Dot type="radio" name="seam" checked={seam === "thick"} onChange={() => setSeam("thick")} />Thick Seam Display</Option>
              </PanelGroup>
            </Body>
          </Rollout>
        </RolloutList>
        <Scroll />
      </Rollouts>
    </Panel>
  );
};

export default function App() {
  return (
    <>
      <GlobalStyle />
      <Shell>
        <Workspace>
          <Scene />
          <UvWindow />
          <OptionsStrip>
            <Group><GroupLegend>Soft Selection</GroupLegend></Group>
            <Group><GroupLegend>Selection Modes</GroupLegend></Group>
            <RotateButton>Rot. +90</RotateButton>
          </OptionsStrip>
        </Workspace>
        <CommandPanel />
      </Shell>
    </>
  );
}
